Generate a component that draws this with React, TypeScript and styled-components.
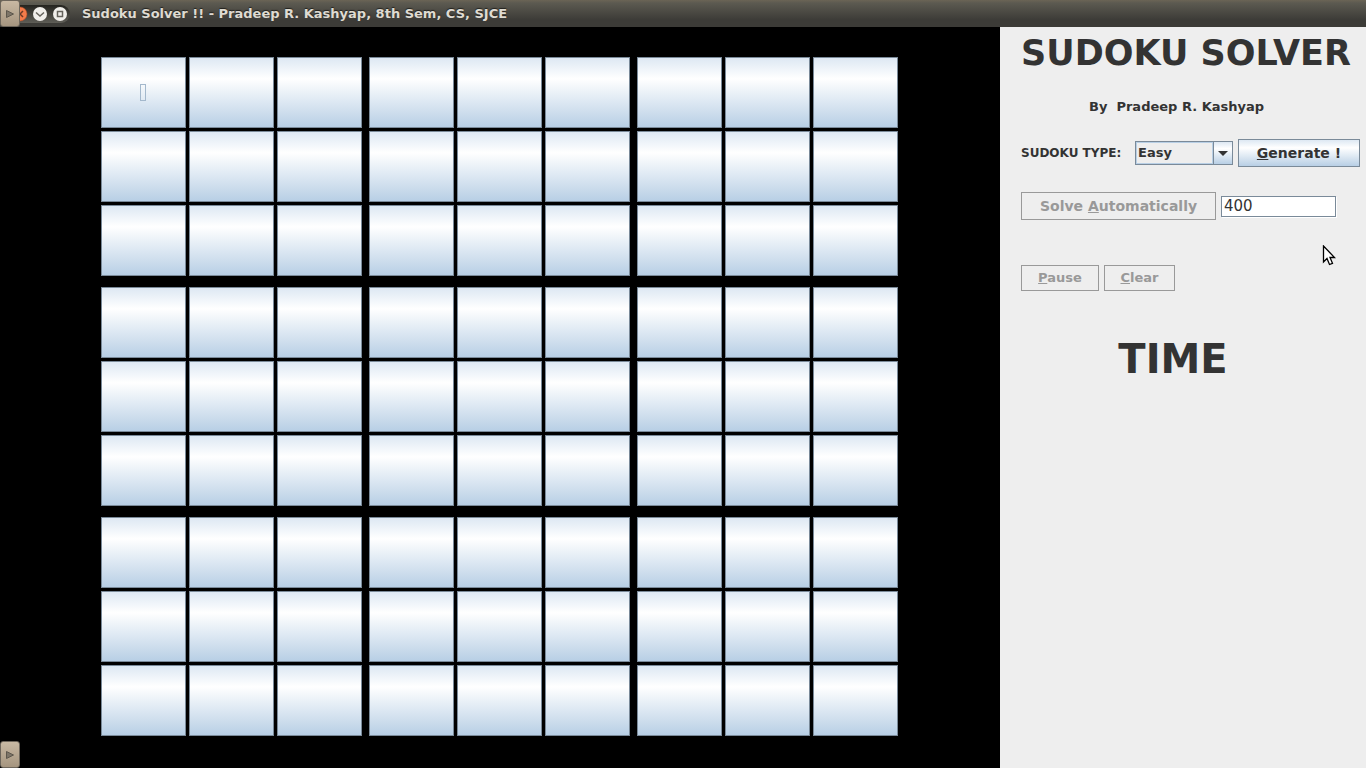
import React from "react";
import styled, { createGlobalStyle } from "styled-components";

const GlobalStyle = createGlobalStyle`
  *, *::before, *::after { box-sizing: border-box; }
  body {
    margin: 0;
    background: #000;
    color: #333;
    font-family: "DejaVu Sans", sans-serif;
  }
`;

const steel = "linear-gradient(to bottom, #dde8f3 0%, #ffffff 30%, #b8cfe5 100%)";

const Window = styled.div`
  display: flex;
  flex-direction: column;
  min-height: 100vh;
`;

const TitleBar = styled.header`
  display: flex;
  align-items: center;
  height: 27px;
  background: linear-gradient(to bottom, #6b6455 0, #5c5a51 3px, #3c3b37 20px, #3c3b37 100%);
`;

const PanelTab = styled.button`
  display: flex;
  align-items: center;
  justify-content: center;
  width: 20px;
  height: 27px;
  padding: 0;
  border: 1px solid #6d665b;
  border-radius: 3px;
  background: linear-gradient(to bottom, #c8b9a3, #a5957f);
`;

const BottomTab = styled(PanelTab)`
  position: absolute;
  left: 0;
  bottom: 0;
`;

const WindowControls = styled.div`
  display: flex;
  align-items: center;
  width: 50px;
  height: 18px;
  margin-top: 1px;
  border-radius: 0 9px 9px 0;
  background: linear-gradient(to bottom, #25241f, #5f5e57);
  overflow: hidden;
`;

const ControlButton = styled.button`
  display: flex;
  padding: 0;
  border: 0;
  background: none;
`;

const WindowTitle = styled.h1`
  margin: 0 0 0 12px;
  color: #dfdbd2;
  font-size: 13px;
  line-height: 16px;
  font-weight: bold;
  text-shadow: 0 -1px 1px #22211e;
  white-space: nowrap;
`;

const Content = styled.main`
  display: flex;
  flex: 1;
`;

const Board = styled.section`
  display: grid;
  flex: 1;
  grid-template-columns: repeat(3, 1fr);
  grid-template-rows: repeat(3, 1fr);
  gap: 11px 7px;
  padding: 30px 102px 32px 101px;
  background: #000;
`;

const Block = styled.div`
  display: grid;
  grid-template-columns: repeat(3, 1fr);
  grid-template-rows: repeat(3, 1fr);
  gap: 3px;
`;

const Cell = styled.button`
  display: flex;
  align-items: center;
  justify-content: center;
  min-width: 0;
  padding: 0 1px 0 0;
  border: 1px solid #7a8a99;
  border-radius: 0;
  background: ${steel};
`;

const FocusMark = styled.span`
  width: 6px;
  height: 17px;
  border: 1px solid #a3b8cc;
`;

const Sidebar = styled.aside`
  width: 366px;
  padding: 0 6px 0 21px;
  background: #eee;
`;

const Heading = styled.h2`
  margin: 5px 0 0;
  font-size: 35px;
  line-height: 42px;
  font-weight: bold;
  white-space: nowrap;
`;

const Author = styled.p`
  margin: 24px 0 0 68px;
  font-size: 13px;
  line-height: 18px;
  font-weight: bold;
  white-space: pre;
`;

const Row = styled.div<{ $top: number }>`
  display: flex;
  align-items: center;
  gap: 5px;
  margin-top: ${(p) => p.$top}px;
`;

const TypeLabel = styled.label`
  flex: 1;
  font-size: 12px;
  font-weight: bold;
  white-space: nowrap;
`;

const SelectBox = styled.div`
  display: flex;
  width: 98px;
  height: 24px;
  border: 1px solid #7a8a99;
`;

const TypeSelect = styled.select`
  appearance: none;
  flex: 1;
  min-width: 0;
  padding: 0 0 2px 1px;
  border: 1px solid #b8cfe5;
  border-radius: 0;
  background: #eee;
  color: #333;
  font: bold 13px "DejaVu Sans", sans-serif;
`;

const Arrow = styled.span`
  display: flex;
  align-items: center;
  justify-content: center;
  width: 19px;
  border-left: 1px solid #7a8a99;
  background: ${steel};
  pointer-events: none;
`;

const PushButton = styled.button<{ $width: number; $small?: boolean }>`
  width: ${(p) => p.$width}px;
  height: ${(p) => (p.$small ? 26 : 28)}px;
  padding: 0 0 1px;
  border: 1px solid #7a8a99;
  border-radius: 0;
  background: ${steel};
  color: #333;
  font: bold ${(p) => (p.$small ? 13 : 14)}px "DejaVu Sans", sans-serif;
  white-space: nowrap;

  &:disabled {
    border-color: #999;
    background: #eee;
    color: #999;
  }
`;

const DelayInput = styled.input`
  width: 115px;
  height: 21px;
  padding: 0 2px;
  border: 1px solid #7a8a99;
  border-radius: 0;
  box-shadow: 1px 1px 0 #fff;
  background: #fff;
  color: #333;
  font: 15px "DejaVu Sans", sans-serif;
`;

const TimeHeading = styled.h2`
  margin: 44px 35px 0 0;
  font-size: 40px;
  line-height: 48px;
  font-weight: bold;
  text-align: center;
`;

const Pointer = styled.svg`
  position: absolute;
  top: 245px;
  right: 30px;
  pointer-events: none;
`;

const TabArrow = () => (
  <svg width="8" height="8" viewBox="0 0 8 8" aria-hidden="true">
    <path d="M0.500 0.500L7.500 4L0.500 7.500Z" fill="#7d7568" stroke="#5d574c" />
  </svg>
);

export default function App() {
  const nine = Array.from({ length: 9 }, (_, i) => i);
  return (
    <Window>
      <GlobalStyle />
      <TitleBar>
        <PanelTab aria-label="Show panel"><TabArrow /></PanelTab>
        <WindowControls>
          <ControlButton aria-label="Close">
            <svg width="10" height="18" viewBox="0 0 10 18">
              <circle cx="0" cy="9" r="7" fill="#f47b4a" stroke="#b84a20" strokeWidth="0.500" />
              <path d="M-3 6L3 12M-3 12L3 6" stroke="#6b3a26" strokeWidth="1.500" />
            </svg>
          </ControlButton>
          <ControlButton aria-label="Minimize">
            <svg width="20" height="18" viewBox="0 0 20 18">
              <circle cx="10" cy="9" r="7" fill="#f1efeb" />
              <path d="M6 7.500L10 11L14 7.500" fill="none" stroke="#66635c" strokeWidth="1.500" />
            </svg>
          </ControlButton>
          <ControlButton aria-label="Maximize">
            <svg width="20" height="18" viewBox="0 0 20 18">
              <circle cx="10" cy="9" r="7" fill="#f1efeb" />
              <rect x="7.500" y="6.500" width="5" height="5" fill="none" stroke="#66635c" strokeWidth="1.500" />
            </svg>
          </ControlButton>
        </WindowControls>
        <WindowTitle>Sudoku Solver !! - Pradeep R. Kashyap, 8th Sem, CS, SJCE</WindowTitle>
      </TitleBar>
      <Content>
        <Board aria-label="Sudoku board">
          {nine.map((b) => (
            <Block key={b}>
              {nine.map((c) => (
                <Cell key={c} aria-label={`Block ${b + 1}, cell ${c + 1}`}>
                  {b === 0 && c === 0 && <FocusMark />}
                </Cell>
              ))}
            </Block>
          ))}
        </Board>
        <Sidebar>
          <Heading>SUDOKU SOLVER</Heading>
          <Author>{"By  Pradeep R. Kashyap"}</Author>
          <Row $top={23}>
            <TypeLabel htmlFor="type">SUDOKU TYPE:</TypeLabel>
            <SelectBox>
              <TypeSelect id="type" defaultValue="Easy">
                <option>Easy</option>
                <option>Medium</option>
                <option>Hard</option>
              </TypeSelect>
              <Arrow>
                <svg width="10" height="5" viewBox="0 0 10 5" aria-hidden="true">
                  <path d="M0 0H10L5 5Z" fill="#333" />
                </svg>
              </Arrow>
            </SelectBox>
            <PushButton $width={122}><u>G</u>enerate !</PushButton>
          </Row>
          <Row $top={25}>
            <PushButton $width={195} disabled>Solve <u>A</u>utomatically</PushButton>
            <DelayInput aria-label="Delay" defaultValue="400" />
          </Row>
          <Row $top={45}>
            <PushButton $width={78} $small disabled><u>P</u>ause</PushButton>
            <PushButton $width={71} $small disabled><u>C</u>lear</PushButton>
          </Row>
          <TimeHeading>TIME</TimeHeading>
        </Sidebar>
      </Content>
      <BottomTab aria-label="Show bottom panel"><TabArrow /></BottomTab>
      <Pointer width="14" height="22" viewBox="0 0 14 22" aria-hidden="true">
        <path d="M1.500 1V17L5 13.500L7.500 19.500L10.500 18.300L8 12.500H12.500Z" fill="#fff" stroke="#000" strokeWidth="1.300" />
      </Pointer>
    </Window>
  );
}
